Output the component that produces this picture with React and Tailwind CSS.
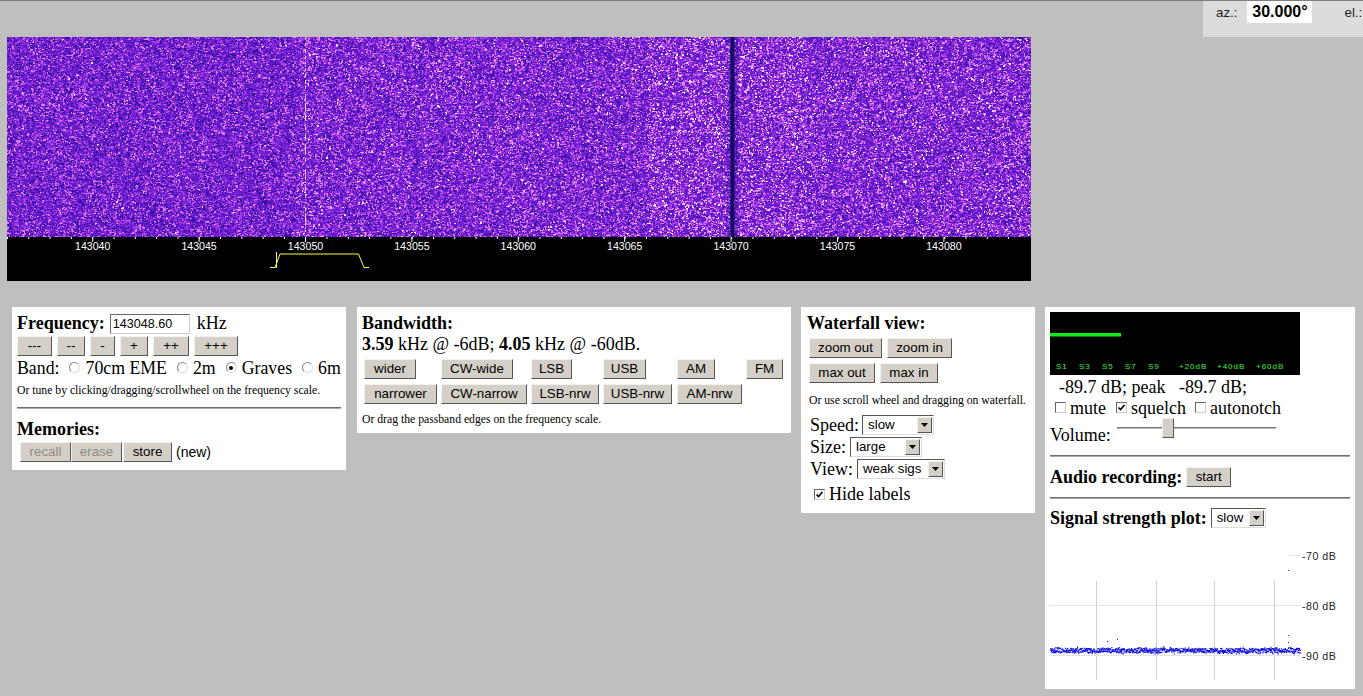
import { useEffect, useRef } from "react";

const serif = "font-['Liberation_Serif',serif]";
const sans = "font-['Liberation_Sans',sans-serif]";

// small seeded generator so every render gives the same noise
const makeRand = (seed) => {
  let s = seed;
  return () => {
    s = (s * 1664525 + 1013904223) >>> 0;
    return ((s >>> 8) % 100000) / 100000;
  };
};

const Btn = ({ children, w, disabled }) => (
  <button
    style={{ width: w }}
    className={`block h-5 p-0 shrink-0 bg-[#d4d0c8] border border-t-[#f4f2ee] border-l-[#f4f2ee] border-r-[#555] border-b-[#555] text-[13.33px] leading-none ${sans} ${disabled ? "text-[#8f8c86]" : "text-black"}`}
  >
    {children}
  </button>
);

const Radio = ({ on }) => (
  <span className="inline-flex items-center justify-center w-[11px] h-[11px] rounded-full border border-[#888] border-r-[#ddd] border-b-[#ddd] bg-white mr-[5px]">
    {on && <span className="w-1 h-1 rounded-full bg-black" />}
  </span>
);

const Check = ({ on }) => (
  <span className="inline-flex items-center justify-center w-[11px] h-[11px] border border-[#666] border-r-[#ccc] border-b-[#ccc] bg-white mr-[4px]">
    {on && (
      <svg width="9" height="9" viewBox="0 0 9 9">
        <path d="M1.5 4.5 L3.5 6.5 L7.5 2" fill="none" stroke="#000" strokeWidth="1.6" />
      </svg>
    )}
  </span>
);

const Select = ({ value, w }) => (
  <span
    style={{ width: w }}
    className={`inline-flex items-center h-[20px] border border-t-[#555] border-l-[#555] border-r-[#ddd] border-b-[#ddd] bg-white text-[13.33px] ${sans}`}
  >
    <span className="flex-1 pl-[5px] leading-none">{value}</span>
    <span className="flex items-center justify-center w-[15px] h-[16px] mr-px bg-[#d4d0c8] border border-t-[#f4f2ee] border-l-[#f4f2ee] border-r-[#555] border-b-[#555]">
      <svg width="7" height="4" viewBox="0 0 7 4">
        <path d="M0 0 H7 L3.5 4 Z" fill="#000" />
      </svg>
    </span>
  </span>
);

const Rule = () => <div className="h-0.5 bg-[#6e6e6e] border-b border-[#aaa]" />;

const colorFor = (level) => {
  if (level < 0.14) return "rgb(52,14,156)";
  if (level < 0.38) return "rgb(86,24,194)";
  if (level < 0.6) return "rgb(120,32,216)";
  if (level < 0.78) return "rgb(168,58,230)";
  if (level < 0.93) return "rgb(220,122,240)";
  return "rgb(248,222,250)";
};

const Waterfall = () => {
  const ref = useRef(null);
  useEffect(() => {
    const ctx = ref.current.getContext("2d");
    const rand = makeRand(12345);
    // mix of one and two pixel cells, the picture's grain is between the two
    for (let y = 0; y < 200; y++) {
      for (let x = 0; x < 1024; x++) {
        if (rand() < 0.45) continue;
        let level = rand() * 0.85 + rand() * 0.15;
        if (x > 640 && x < 722) level += 0.07;
        else if (x > 730 && x < 800) level += 0.07;
        else if (x > 800) level += 0.03;
        else if (x < 290) level -= 0.04;
        ctx.fillStyle = colorFor(level);
        ctx.fillRect(x, y, 2, 2);
      }
    }
    // dim band and dark notch at 143070
    ctx.fillStyle = "rgba(40,10,130,0.25)";
    ctx.fillRect(720, 0, 11, 200);
    ctx.fillStyle = "rgba(20,8,110,0.5)";
    ctx.fillRect(723, 0, 5, 200);
    ctx.fillStyle = "rgba(14,6,90,0.85)";
    ctx.fillRect(724, 0, 3, 200);
    // faint carrier at 143050
    ctx.fillStyle = "rgba(245,225,245,0.8)";
    for (let y = 0; y < 200; y += 1) {
      if (rand() < 0.4) ctx.fillRect(298, y, 1, 2);
    }
  }, []);
  return <canvas ref={ref} width={1024} height={200} className="block w-[1024px] h-[200px] bg-[#5a18c0]" />;
};

const scaleLabels = [143040, 143045, 143050, 143055, 143060, 143065, 143070, 143075, 143080];

const FreqScale = () => {
  const minor = [];
  for (let i = 0; i < 48; i++) minor.push(0.5 + i * 21.3);
  return (
    <svg width="1024" height="44" className="block bg-black">
      {minor.map((x) => (
        <line key={x} x1={x} x2={x} y1="0" y2="2" stroke="#fff" />
      ))}
      {scaleLabels.map((f, i) => {
        const x = 85.7 + i * 106.4;
        return (
          <g key={f}>
            <line x1={x} x2={x} y1="0" y2="5" stroke="#fff" />
            <text x={x} y="13" fill="#fff" textAnchor="middle" fontSize="10.6" fontFamily="Liberation Sans, sans-serif">
              {f}
            </text>
          </g>
        );
      })}
      <path d="M263 30.5 H268 L273 17 H351.5 L357 30.5 H362" fill="none" stroke="#ffff40" />
      <line x1="269.5" x2="269.5" y1="15" y2="31" stroke="#ffff40" />
    </svg>
  );
};

const meterLabels = [
  ["S1", 6], ["S3", 29], ["S5", 52], ["S7", 75], ["S9", 98],
  ["+20dB", 129], ["+40dB", 167], ["+60dB", 206],
];

const Meter = () => (
  <svg width="250" height="63" className="block bg-black">
    <rect x="0" y="21" width="71" height="3.5" fill="#11ee11" />
    {meterLabels.map(([t, x]) => (
      <text key={t} x={x} y="56.5" fill="#3cf03c" fontSize="8" letterSpacing="1" fontFamily="Liberation Sans, sans-serif">
        {t}
      </text>
    ))}
  </svg>
);

const SignalPlot = () => {
  const rand = makeRand(777);
  let dots = "";
  for (let x = 0; x < 250; x += 0.25) {
    const y = 105 + (rand() - 0.5) * 4.5 + (rand() < 0.3 ? (rand() - 0.5) * 4 : 0);
    dots += `M${x} ${y.toFixed(1)}h1.2v1.2h-1.2z`;
  }
  return (
    <svg width="300" height="140" className="block">
      <g stroke="#d0d0d0">
        <line x1="46.5" x2="46.5" y1="36" y2="135" />
        <line x1="106.5" x2="106.5" y1="36" y2="135" />
        <line x1="164.5" x2="164.5" y1="36" y2="135" />
        <line x1="224.5" x2="224.5" y1="36" y2="135" />
      </g>
      <g stroke="#e4e4e4">
        <line x1="239" x2="250" y1="10.5" y2="10.5" />
        <line x1="0" x2="250" y1="60.5" y2="60.5" />
        <line x1="0" x2="250" y1="110.5" y2="110.5" />
      </g>
      <path d={dots} fill="#1414e6" />
      <path d="M238 25h1v1h-1z M238 97h1v1h-1z M238 90h1v1h-1z M57 96h1v1h-1z M67 94h1v1h-1z" fill="#2020a0" />
      {[["-70 dB", 15], ["-80 dB", 65], ["-90 dB", 115]].map(([t, y]) => (
        <text key={t} x="252" y={y} fill="#222" fontSize="10.6" letterSpacing="0.5" fontFamily="Liberation Sans, sans-serif">
          {t}
        </text>
      ))}
    </svg>
  );
};

const Panel = ({ className, children }) => (
  <div className={`bg-white shrink-0 text-black text-[18px] leading-[20px] whitespace-nowrap ${serif} ${className}`}>{children}</div>
);

export default function App() {
  return (
    <div className="w-[1363px] h-[696px] overflow-hidden bg-[#bfbfbf] border-t border-[#808080]">
      {/* top bar with the rotor readout */}
      <div className="flex justify-end h-[36px]">
        <div className={`flex w-[160px] h-[36px] bg-[#dcdcdc] text-[13.33px] text-[#222] ${sans}`}>
          <span className="ml-[13px] mt-[2px]">az.:</span>
          <span className="ml-[10px] w-[65px] h-[22px] bg-white text-center text-[16px] font-bold text-black leading-[22px]">30.000°</span>
          <span className="ml-[32px] mt-[2px]">el.:</span>
        </div>
      </div>

      {/* waterfall and frequency scale */}
      <div className="ml-[7px] w-[1024px]">
        <Waterfall />
        <FreqScale />
      </div>

      <div className="flex items-start mt-[26px] ml-[12px]">
        {/* frequency and memories */}
        <Panel className="w-[334px] h-[163px] px-[5px] pt-[6px]">
          <div className="flex items-center h-[22px]">
            <b className="pb-[2px]">Frequency:</b>
            <span className={`ml-[5px] w-[80px] h-[20px] px-[2px] border border-t-[#666] border-l-[#666] border-r-[#ccc] border-b-[#ccc] text-[12.6px] leading-[18px] ${sans}`}>143048.60</span>
            <span className="ml-[7px] pb-[2px]">kHz</span>
          </div>
          <div className="flex gap-[5px] mt-px">
            <Btn w={35}>---</Btn>
            <Btn w={28}>--</Btn>
            <Btn w={25}>-</Btn>
            <Btn w={28}>+</Btn>
            <Btn w={36}>++</Btn>
            <Btn w={44}>+++</Btn>
          </div>
          <div className="flex items-center h-[23px] text-[17.8px]">
            <span>Band:</span>
            <span className="ml-[10px] flex items-center"><Radio />70cm EME</span>
            <span className="ml-[10px] flex items-center"><Radio />2m</span>
            <span className="ml-[10px] flex items-center"><Radio on />Graves</span>
            <span className="ml-[10px] flex items-center"><Radio />6m</span>
          </div>
          <div className="text-[11.7px] leading-[14px] mt-[5px]">Or tune by clicking/dragging/scrollwheel on the frequency scale.</div>
          <div className="mt-[9px]"><Rule /></div>
          <b className="block mt-[10px]">Memories:</b>
          <div className="flex items-center mt-[3px] ml-[3px]">
            <Btn w={51} disabled>recall</Btn>
            <Btn w={51} disabled>erase</Btn>
            <span className="ml-px flex"><Btn w={49}>store</Btn></span>
            <span className={`ml-[4px] text-[14px] ${sans}`}>(new)</span>
          </div>
        </Panel>

        {/* bandwidth */}
        <Panel className="w-[434px] h-[126px] ml-[11px] px-[5px] pt-[6px]">
          <b className="block">Bandwidth:</b>
          <div className="mt-px"><b>3.59</b> kHz @ -6dB; <b>4.05</b> kHz @ -60dB.</div>
          <div className="grid grid-cols-[77px_90px_72px_74px_69px_auto] justify-items-start gap-y-[5px] mt-[5px] ml-[2px]">
            <Btn w={52}>wider</Btn>
            <Btn w={72}>CW-wide</Btn>
            <Btn w={41}>LSB</Btn>
            <Btn w={43}>USB</Btn>
            <Btn w={38}>AM</Btn>
            <Btn w={37}>FM</Btn>
            <Btn w={73}>narrower</Btn>
            <Btn w={86}>CW-narrow</Btn>
            <Btn w={68}>LSB-nrw</Btn>
            <Btn w={69}>USB-nrw</Btn>
            <Btn w={65}>AM-nrw</Btn>
          </div>
          <div className="text-[11.7px] leading-[14px] mt-[9px]">Or drag the passband edges on the frequency scale.</div>
        </Panel>

        {/* waterfall controls */}
        <Panel className="w-[234px] h-[206px] ml-[10px] pl-[6px] pt-[6px]">
          <b className="block">Waterfall view:</b>
          <div className="flex gap-[5px] mt-[5px] ml-[2px]">
            <Btn w={73}>zoom out</Btn>
            <Btn w={65}>zoom in</Btn>
          </div>
          <div className="flex gap-[5px] mt-[5px] ml-[2px]">
            <Btn w={66}>max out</Btn>
            <Btn w={58}>max in</Btn>
          </div>
          <div className="text-[11.7px] leading-[14px] mt-[11px] ml-[2px]">Or use scroll wheel and dragging on waterfall.</div>
          <div className="flex items-center h-[22px] mt-[6px] ml-[3px]">Speed:<span className="ml-[3px] flex"><Select value="slow" w={72} /></span></div>
          <div className="flex items-center h-[22px] ml-[3px]">Size:<span className="ml-[4px] flex"><Select value="large" w={72} /></span></div>
          <div className="flex items-center h-[22px] ml-[3px]">View:<span className="ml-[4px] flex"><Select value="weak sigs" w={88} /></span></div>
          <div className="flex items-center h-[28px] ml-[7px]"><Check on />Hide labels</div>
        </Panel>

        {/* s-meter, audio and signal plot */}
        <Panel className="w-[310px] h-[382px] ml-[10px] px-[5px] pt-[5px]">
          <Meter />
          <div className="h-[24px] pl-[9px] leading-[24px] whitespace-pre">-89.7 dB; peak   -89.7 dB;</div>
          <div className="flex items-center h-[17px] pl-[5px]">
            <Check />mute
            <span className="ml-[10px] flex items-center"><Check on />squelch</span>
            <span className="ml-[9px] flex items-center"><Check />autonotch</span>
          </div>
          <div className="flex h-[30px]">
            <span className="mt-[9px]">Volume:</span>
            <div className="relative ml-[6px] mt-[11px] w-[159px] h-[2px] bg-[#777] border-b border-[#bbb]">
              <span className="absolute left-[45px] top-[-9px] w-[12px] h-[20px] bg-[#d4d0c8] border border-t-[#f4f2ee] border-l-[#f4f2ee] border-r-[#555] border-b-[#555]" />
            </div>
          </div>
          <div className="mt-[9px]"><Rule /></div>
          <div className="flex items-center h-[20px] mt-[10px]">
            <b>Audio recording:</b>
            <span className="ml-[4px] flex"><Btn w={45}>start</Btn></span>
          </div>
          <div className="mt-[10px]"><Rule /></div>
          <div className="flex items-center h-[20px] mt-[9px]">
            <b>Signal strength plot:</b>
            <span className="ml-[4px] flex"><Select value="slow" w={55} /></span>
          </div>
          <div className="mt-[17px]"><SignalPlot /></div>
        </Panel>
      </div>
    </div>
  );
}
